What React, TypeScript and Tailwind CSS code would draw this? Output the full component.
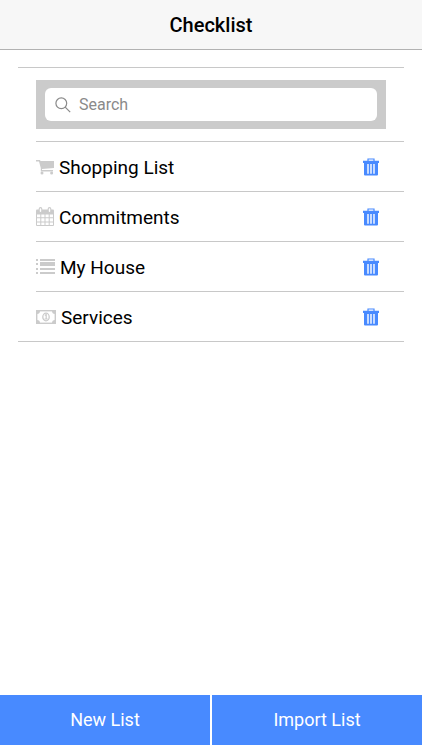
import React from 'react';

const CartIcon = () => (
  <svg width="18" height="16" viewBox="0 0 18 16" fill="currentColor" aria-hidden="true">
    <path d="M0 1h4l.5 1H18v7L6 10v1h11v1.500H4.800V9L3 2.500H0z" />
    <circle cx="6" cy="14" r="1.500" />
    <circle cx="15.600" cy="14" r="1.500" />
  </svg>
);

const CalendarIcon = () => (
  <svg width="18" height="19" viewBox="0 0 18 19" aria-hidden="true">
    <path fill="currentColor" d="M1 2.500h16q1 0 1 1V18q0 1-1 1H1q-1 0-1-1V3.500q0-1 1-1z" />
    <path
      fill="#fff"
      d="M1 7.500H4.300V10.300H1zM5.300 7.500H8.500V10.300H5.300zM9.500 7.500H12.700V10.300H9.500zM13.700 7.500H17V10.300H13.700zM1 11.300H4.300V14.400H1zM5.300 11.300H8.500V14.400H5.300zM9.500 11.300H12.700V14.400H9.500zM13.700 11.300H17V14.400H13.700zM1 15.400H4.300V18H1zM5.300 15.400H8.500V18H5.300zM9.500 15.400H12.700V18H9.500zM13.700 15.400H17V18H13.700z"
    />
    <rect x="3.200" y=".6" width="2.600" height="5" rx="1.300" fill="#fff" stroke="currentColor" strokeWidth="1.100" />
    <rect x="12.200" y=".6" width="2.600" height="5" rx="1.300" fill="#fff" stroke="currentColor" strokeWidth="1.100" />
  </svg>
);

const ListIcon = () => (
  <svg width="19" height="16" viewBox="0 0 19 16" fill="currentColor" aria-hidden="true">
    <path d="M0 0h2v2H0zM0 4h2v2H0zM0 9h2v2H0zM0 13h2v2H0zM4 0h15v2H4zM4 3h15v4H4zM4 9h15v2H4zM4 13h15v2H4z" />
  </svg>
);

const MoneyIcon = () => (
  <svg width="20" height="14" viewBox="0 0 20 14" fill="none" stroke="currentColor" aria-hidden="true">
    <rect x=".7" y=".7" width="18.600" height="12.600" strokeWidth="1.400" />
    <path fill="currentColor" stroke="none" d="M1 1h3Q4 4 1 4zM19 1h-3Q16 4 19 4zM1 13h3Q4 10 1 10zM19 13h-3Q16 10 19 10z" />
    <ellipse cx="10" cy="7" rx="3.200" ry="3.800" strokeWidth="1.300" />
    <path d="M8.700 5.300L10.200 4.600V9M8.500 9h3.200" strokeWidth="1.200" />
  </svg>
);

const TrashIcon = () => (
  <svg width="16" height="18" viewBox="0 0 16 18" aria-hidden="true">
    <path d="M5 3V1h6v2" fill="none" stroke="currentColor" strokeWidth="1.200" />
    <path fill="currentColor" d="M0 2.700h16v2.300H0zM1 4.500h14V16.500q0 1-1 1H2q-1 0-1-1z" />
    <path d="M5 6v9.800M8 6v9.800M11 6v9.800" stroke="#fff" strokeWidth="1.400" />
  </svg>
);

const SearchIcon = () => (
  <svg width="16" height="16" viewBox="0 0 16 16" fill="none" stroke="currentColor" strokeWidth="1.200" aria-hidden="true">
    <circle cx="6.300" cy="6.300" r="5.400" />
    <path d="M10.200 10.200L15.200 15.200" />
  </svg>
);

const lists = [
  { name: 'Shopping List', Icon: CartIcon },
  { name: 'Commitments', Icon: CalendarIcon },
  { name: 'My House', Icon: ListIcon },
  { name: 'Services', Icon: MoneyIcon },
];

export default function App() {
  return (
    <div className="flex min-h-screen flex-col bg-white font-['Roboto',sans-serif] text-black">
      <header className="flex h-[50px] items-center justify-center border-b border-[#b2b2b2] bg-[#f7f7f7]">
        <h1 className="text-xl font-medium">Checklist</h1>
      </header>

      <main className="flex-1 px-[18px] pt-[17px]">
        <div className="border-y border-[#c8c8c8] pt-3 pl-[18px]">
          <div className="mr-[18px] mb-3 bg-[#cbcbcb] px-[9px] py-2">
            <label className="flex h-[33px] items-center gap-2 rounded-md bg-white px-[10px] text-[#8a8a8a]">
              <SearchIcon />
              <input
                type="search"
                placeholder="Search"
                aria-label="Search"
                className="min-w-0 flex-1 bg-transparent text-base outline-none placeholder:text-[#8a8a8a]"
              />
            </label>
          </div>

          <ul>
            {lists.map(({ name, Icon }) => (
              <li key={name} className="flex h-[50px] items-center justify-between border-t border-[#c8c8c8] pr-[25px]">
                <span className="flex items-center gap-[5px] text-[19px] leading-6 text-[#cbcbcb]">
                  <Icon />
                  <span className="pt-0.5 text-black">{name}</span>
                </span>
                <button type="button" aria-label={`Delete ${name}`} className="text-[#488aff]">
                  <TrashIcon />
                </button>
              </li>
            ))}
          </ul>
        </div>
      </main>

      <footer className="grid grid-cols-2 gap-[2px] pb-[5px] text-lg text-white">
        <button type="button" className="h-[50px] bg-[#488aff]">New List</button>
        <button type="button" className="h-[50px] bg-[#488aff]">Import List</button>
      </footer>
    </div>
  );
}
